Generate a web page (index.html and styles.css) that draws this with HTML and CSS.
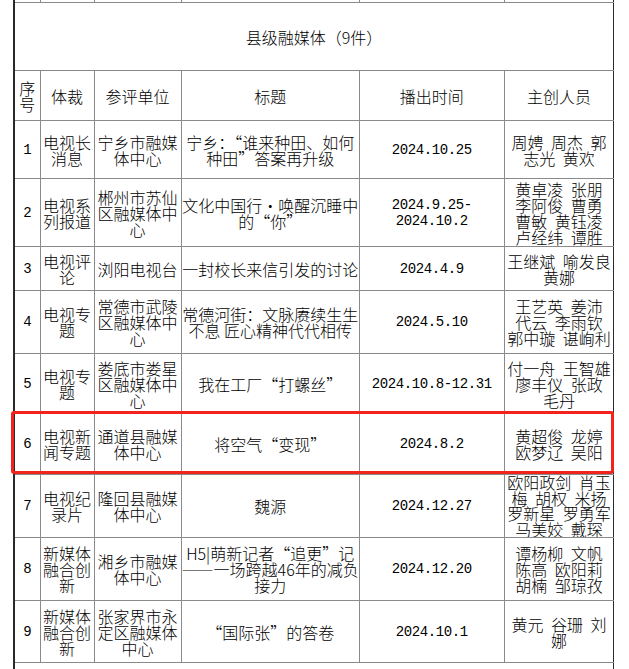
FILE: index.html
```html
<!DOCTYPE html>
<html lang="zh-CN">
<head>
<meta charset="utf-8">
<title>县级融媒体（9件）</title>
<link rel="stylesheet" href="styles.css">
</head>
<body>
<div class="sheet">
  <table class="awards">
    <colgroup>
      <col class="c-no"><col class="c-type"><col class="c-unit"><col class="c-title"><col class="c-date"><col class="c-people">
    </colgroup>
    <tbody>
      <tr class="r-cut"><td></td><td></td><td></td><td></td><td></td><td></td></tr>
      <tr class="r-caption"><td colspan="6">县级融媒体（9件）</td></tr>
      <tr class="r-head">
        <th>序<br>号</th><th>体裁</th><th>参评单位</th><th>标题</th><th>播出时间</th><th>主创人员</th>
      </tr>
      <tr class="h58">
        <td class="num">1</td><td>电视长<br>消息</td><td>宁乡市融媒<br>体中心</td>
        <td>宁乡：“谁来种田、如何<br>种田”答案再升级</td><td class="num">2024.10.25</td>
        <td class="ppl">周娉 周杰 郭<br>志光 黄欢</td>
      </tr>
      <tr class="h68">
        <td class="num">2</td><td>电视系<br>列报道</td><td>郴州市苏仙<br>区融媒体中<br>心</td>
        <td>文化中国行·唤醒沉睡中<br>的“你”</td><td class="num">2024.9.25-<br>2024.10.2</td>
        <td class="ppl">黄卓凌 张朋<br>李阿俊 曹勇<br>曹敏 黄钰凌<br>卢经纬 谭胜</td>
      </tr>
      <tr class="h44">
        <td class="num">3</td><td>电视评<br>论</td><td>浏阳电视台</td>
        <td>一封校长来信引发的讨论</td><td class="num">2024.4.9</td>
        <td class="ppl">王继斌 喻发良<br>黄娜</td>
      </tr>
      <tr class="h63">
        <td class="num">4</td><td>电视专<br>题</td><td>常德市武陵<br>区融媒体中<br>心</td>
        <td>常德河街：文脉赓续生生<br>不息 匠心精神代代相传</td><td class="num">2024.5.10</td>
        <td class="ppl">王艺英 姜沛<br>代云 李雨钦<br>郭中璇 谌峋利</td>
      </tr>
      <tr class="h60">
        <td class="num">5</td><td>电视专<br>题</td><td>娄底市娄星<br>区融媒体中<br>心</td>
        <td>我在工厂“打螺丝”</td><td class="num">2024.10.8-12.31</td>
        <td class="ppl">付一舟 王智雄<br>廖丰仪 张政<br>毛丹</td>
      </tr>
      <tr class="h61">
        <td class="num">6</td><td>电视新<br>闻专题</td><td>通道县融媒<br>体中心</td>
        <td>将空气“变现”</td><td class="num">2024.8.2</td>
        <td class="ppl">黄超俊 龙婷<br>欧梦辽 吴阳</td>
      </tr>
      <tr class="h63">
        <td class="num">7</td><td>电视纪<br>录片</td><td>隆回县融媒<br>体中心</td>
        <td>魏源</td><td class="num">2024.12.27</td>
        <td class="ppl tight">欧阳政剑 肖玉<br>梅 胡权 米扬<br>罗新星 罗勇军<br>马美姣 戴琛</td>
      </tr>
      <tr class="h63">
        <td class="num">8</td><td>新媒体<br>融合创<br>新</td><td>湘乡市融媒<br>体中心</td>
        <td>H5|萌新记者“追更”记<br>——一场跨越46年的减负<br>接力</td><td class="num">2024.12.20</td>
        <td class="ppl">谭杨柳 文帆<br>陈高 欧阳莉<br>胡楠 邹琼孜</td>
      </tr>
      <tr class="h62">
        <td class="num">9</td><td>新媒体<br>融合创<br>新</td><td>张家界市永<br>定区融媒体<br>中心</td>
        <td>“国际张”的答卷</td><td class="num">2024.10.1</td>
        <td class="ppl">黄元 谷珊 刘<br>娜</td>
      </tr>
      <tr class="r-tail"><td colspan="6"></td></tr>
    </tbody>
  </table>
  <div class="highlight"></div>
</div>
</body>
</html>
```

FILE: styles.css
```css
html, body {
  margin: 0;
  padding: 0;
  background: #ffffff;
  overflow: hidden;
}

.sheet {
  position: relative;
  padding-left: 13px;
}

.awards {
  border-collapse: collapse;
  table-layout: fixed;
  width: 601px;
  font-family: "Noto Sans CJK SC", "Noto Sans", sans-serif;
  font-weight: 300;
  font-size: 16px;
  line-height: 16px;
  color: #000000;
}

.c-no { width: 26px; }
.c-type { width: 54px; }
.c-unit { width: 87px; }
.c-title { width: 178px; }
.c-date { width: 145px; }
.c-people { width: 109px; }

.awards td,
.awards th {
  border: 1px solid #8a8a8a;
  padding: 0;
  text-align: center;
  vertical-align: middle;
  font-weight: 300;
  white-space: nowrap;
  overflow: hidden;
}

.awards td:first-child,
.awards th:first-child {
  border-left: 2px solid #2a2a2a;
}

.awards td:last-child,
.awards th:last-child {
  border-right: 1px solid #2a2a2a;
}

.r-cut td {
  border-top: none;
  height: 2px;
}

.r-caption td { height: 67px; }
.r-head th { height: 49px; }

.h44 td { height: 43px; }
.h58 td { height: 57px; }
.h60 td { height: 59px; }
.h61 td { height: 60px; }
.h62 td { height: 61px; }
.h63 td { height: 62px; }
.h68 td { height: 67px; }

.r-tail td { height: 30px; }

.num {
  font-family: "Liberation Mono", "Noto Sans CJK SC", monospace;
  font-size: 14px;
  letter-spacing: -0.4px;
}

.ppl {
  word-spacing: 4px;
}

.tight {
  line-height: 15.5px;
}

.highlight {
  position: absolute;
  left: 11px;
  top: 411px;
  width: 597px;
  height: 57px;
  border: 3px solid #f2231c;
  border-radius: 3px;
}
```
